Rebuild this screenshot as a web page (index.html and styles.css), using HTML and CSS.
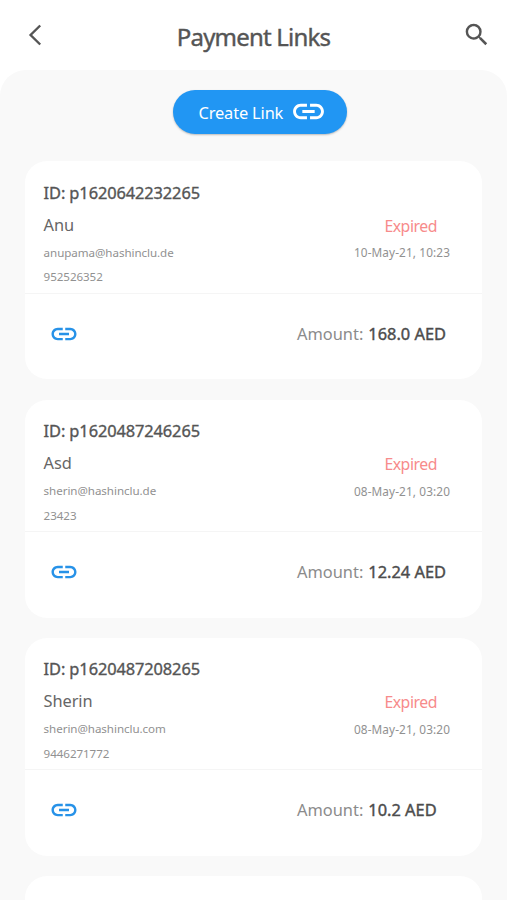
FILE: index.html
```html
<!DOCTYPE html>
<html lang="en">
<head>
<meta charset="utf-8">
<title>Payment Links</title>
<link rel="stylesheet" href="styles.css">
</head>
<body>
<svg class="defs" aria-hidden="true">
  <symbol id="link" viewBox="0 0 24 24"><path d="M3.9 12c0-1.71 1.39-3.1 3.1-3.1h4V7H7c-2.76 0-5 2.24-5 5s2.24 5 5 5h4v-1.9H7c-1.71 0-3.1-1.39-3.1-3.1zM8 13h8v-2H8v2zm9-6h-4v1.9h4c1.71 0 3.1 1.39 3.1 3.1s-1.39 3.1-3.1 3.1h-4V17h4c2.76 0 5-2.24 5-5s-2.24-5-5-5z"/></symbol>
</svg>
<header class="header">
  <svg class="back" viewBox="0 0 14 22"><path d="M12.2 1.5 2.6 11l9.6 9.5"/></svg>
  <h1 class="title">Payment Links</h1>
  <svg class="search" viewBox="0 0 24 24"><path d="M15.5 14h-.79l-.28-.27A6.471 6.471 0 0 0 16 9.5 6.5 6.5 0 1 0 9.5 16c1.61 0 3.09-.59 4.23-1.57l.27.28v.79l5 4.99L20.49 19l-4.99-5zm-6 0C7.01 14 5 11.99 5 9.5S7.01 5 9.5 5 14 7.01 14 9.5 11.99 14 9.5 14z"/></svg>
</header>
<main class="panel">
  <button class="create"><span>Create Link</span><svg><use href="#link"/></svg></button>
  <section class="card">
    <div class="details">
      <div class="who"><div class="id">ID: p1620642232265</div><div class="name">Anu</div><div class="meta">anupama@hashinclu.de</div><div class="meta">952526352</div></div>
      <div class="status"><div class="expired">Expired</div><div class="date">10-May-21, 10:23</div></div>
    </div>
    <div class="footer"><svg><use href="#link"/></svg><div class="amount"><span class="label">Amount:</span><span class="value">168.0 AED</span></div></div>
  </section>
  <section class="card">
    <div class="details">
      <div class="who"><div class="id">ID: p1620487246265</div><div class="name">Asd</div><div class="meta">sherin@hashinclu.de</div><div class="meta">23423</div></div>
      <div class="status"><div class="expired">Expired</div><div class="date">08-May-21, 03:20</div></div>
    </div>
    <div class="footer"><svg><use href="#link"/></svg><div class="amount"><span class="label">Amount:</span><span class="value">12.24 AED</span></div></div>
  </section>
  <section class="card">
    <div class="details">
      <div class="who"><div class="id">ID: p1620487208265</div><div class="name">Sherin</div><div class="meta">sherin@hashinclu.com</div><div class="meta">9446271772</div></div>
      <div class="status"><div class="expired">Expired</div><div class="date">08-May-21, 03:20</div></div>
    </div>
    <div class="footer"><svg><use href="#link"/></svg><div class="amount"><span class="label">Amount:</span><span class="value">10.2 AED</span></div></div>
  </section>
  <section class="card"></section>
</main>
</body>
</html>
```
FILE: styles.css
```css
* { box-sizing: border-box; }
body {
  margin: 0;
  height: 900px;
  overflow: hidden;
  display: flex;
  flex-direction: column;
  background: #fff;
  color: #555;
  font-family: "Noto Sans", "Open Sans", sans-serif;
}
.defs { display: none; }
.header {
  flex: none;
  height: 70px;
  padding: 0 15px 0 28px;
  display: grid;
  grid-template-columns: 30px 1fr 30px;
  align-items: start;
}
.back {
  width: 14px;
  height: 22px;
  margin-top: 24px;
  fill: none;
  stroke: #555;
  stroke-width: 2.4;
}
.title {
  margin: 20px 13px 0 0;
  text-align: center;
  font-size: 24px;
  line-height: 34px;
  font-weight: 400;
  letter-spacing: -0.8px;
  -webkit-text-stroke: 0.4px #555;
}
.search {
  width: 29.5px;
  height: 29.5px;
  margin: 20px 0 0 0.3px;
  fill: #555;
}
.panel {
  flex: 1;
  min-height: 0;
  overflow: hidden;
  display: flex;
  flex-direction: column;
  gap: 20.2px;
  padding: 20px 25px 0;
  background: #f9f9f9;
  border-radius: 26px 26px 0 0;
}
.create {
  flex: none;
  align-self: center;
  width: 174px;
  height: 44px;
  margin: 0 0 7.3px 13px;
  padding: 0 0 0 25.5px;
  display: flex;
  align-items: center;
  border: 0;
  border-radius: 22px;
  background: #2196f3;
  box-shadow: 0 1px 2px rgba(0, 0, 0, 0.25);
  color: #fff;
  font: 400 16.4px/24px "Noto Sans", "Open Sans", sans-serif;
  letter-spacing: -0.15px;
  text-align: left;
}
.create span { width: 91px; padding-top: 1px; white-space: nowrap; }
.create svg { width: 37px; height: 37px; margin-top: -1px; fill: #fff; }
.card {
  flex: none;
  width: 457px;
  height: 218px;
  border-radius: 22px;
  background: #fff;
}
.details {
  height: 132.5px;
  padding: 17.6px 32px 0 18.6px;
  display: flex;
  justify-content: space-between;
  border-bottom: 1px solid #f5f5f5;
  white-space: nowrap;
}
.id {
  font-size: 16.4px;
  line-height: 28px;
  letter-spacing: -0.1px;
  -webkit-text-stroke: 0.35px #555;
}
.name { margin-top: 4px; font-size: 16.4px; line-height: 28px; letter-spacing: -0.1px; color: #666; }
.meta { margin-top: 3px; font-size: 11.6px; line-height: 21.4px; letter-spacing: -0.06px; color: #919191; }
.status { padding-top: 33px; text-align: right; }
.expired { padding-right: 13px; font-size: 15.8px; line-height: 28px; letter-spacing: -0.45px; color: #f78b8b; }
.date { font-size: 11.8px; line-height: 22px; letter-spacing: 0.11px; color: #919191; margin-top: 1.4px; }
.footer {
  height: 80px;
  padding: 0 0 0 24px;
  display: flex;
  align-items: center;
}
.footer svg { width: 30px; height: 30px; fill: #2792e8; }
.amount { margin-left: 218px; display: flex; gap: 5px; font-size: 16.4px; line-height: 28px; white-space: nowrap; }
.label { color: #8b8b8b; }
.value { color: #4c4c4c; -webkit-text-stroke: 0.4px #4c4c4c; }
```
